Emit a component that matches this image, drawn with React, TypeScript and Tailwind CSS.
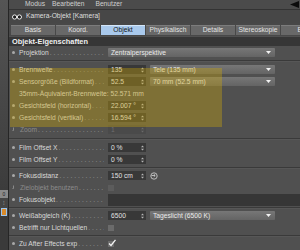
import type { ReactNode } from "react";

const LEADER = " . . . . . . . . . . . . . . . . . . . . . . . . . . . . . . . . . . . .";

function Bullet({ hook }: { hook?: boolean }) {
  if (hook) {
    return (
      <svg width="4" height="5" viewBox="0 0 4 5" className="shrink-0">
        <path d="M1.5 0.5 V3.5 H0.5" stroke="#8a8a8a" strokeWidth="1" fill="none" />
      </svg>
    );
  }
  return <span className="h-[3px] w-[3px] shrink-0 rounded-full bg-[#a9a9a9]" />;
}

function Label({ text, disabled, hook }: { text: string; disabled?: boolean; hook?: boolean }) {
  return (
    <div className="flex w-[99px] shrink-0 items-center pl-[3px] pr-[4px]">
      <Bullet hook={hook} />
      <span className={`ml-[4px] whitespace-nowrap ${disabled ? "text-[#8c8c8c]" : "text-[#d9d9d9]"}`}>
        {text}
      </span>
      <span className="ml-[1px] min-w-0 flex-1 overflow-hidden whitespace-nowrap text-[#9b9b9b]">{LEADER}</span>
    </div>
  );
}

function Spinner({ faint }: { faint?: boolean }) {
  return (
    <svg width="3" height="6" viewBox="0 0 3 6" className="ml-auto mr-[2px] shrink-0">
      <path d="M0 2.3 L1.5 0.5 L3 2.3 Z M0 3.7 L1.5 5.5 L3 3.7 Z" fill={faint ? "#6a6a6a" : "#b5b5b5"} />
    </svg>
  );
}

function Input({ value, faint }: { value: string; faint?: boolean }) {
  return (
    <div
      className={`flex h-[9px] w-[38px] shrink-0 items-center pl-[3px] ${
        faint ? "bg-[#4a4a4a] text-[#6e6e6e]" : "bg-[#383838] text-[#e2e2e2]"
      }`}
    >
      <span className="whitespace-nowrap">{value}</span>
      <Spinner faint={faint} />
    </div>
  );
}

function Dropdown({ value, wide }: { value: string; wide?: boolean }) {
  return (
    <div
      className={`flex h-[9px] shrink-0 items-center rounded-[1px] bg-gradient-to-b from-[#777777] to-[#646464] pl-[3px] text-[#ececec] ${
        wide ? "w-[167px]" : "ml-[4px] w-[125px]"
      }`}
    >
      <span className="whitespace-nowrap">{value}</span>
      <svg width="5" height="3" viewBox="0 0 5 3" className="ml-auto mr-[4px]">
        <path d="M0 0 H5 L2.5 3 Z" fill="#f2f2f2" />
      </svg>
    </div>
  );
}

function Check({ checked, dim }: { checked?: boolean; dim?: boolean }) {
  return (
    <div
      className={`relative flex h-[6px] w-[6px] items-center justify-center ${
        dim ? "bg-[#5c5c5c]" : "bg-[#6b6b6b]"
      }`}
    >
      {checked && (
        <svg width="8" height="8" viewBox="0 0 8 8" className="absolute -top-[2px] left-0">
          <path d="M1 4.5 L3 6.5 L7.5 0.8" stroke="#f4f4f4" strokeWidth="1.3" fill="none" />
        </svg>
      )}
    </div>
  );
}

function Row({ children }: { children: ReactNode }) {
  return <div className="flex h-[12px] items-center">{children}</div>;
}

function Sep({ h }: { h: string }) {
  return (
    <div className={`flex flex-col justify-center ${h}`}>
      <div className="h-px bg-[#3a3a3a]" />
      <div className="h-px bg-[#575757]" />
    </div>
  );
}

const tabs = ["Basis", "Koord.", "Objekt", "Physikalisch", "Details", "Stereoskopie", "Bild"];

export default function App() {
  return (
    <div className="flex h-[250px] w-[300px] overflow-hidden bg-[#505050] font-['Liberation_Sans',Arial,sans-serif] text-[6.7px] leading-none">
      {/* viewport edge */}
      <div className="flex w-[9px] shrink-0 flex-col border-r border-[#262626] bg-[#454545]">
        <div className="h-[190px] bg-gradient-to-b from-[#555555] to-[#3c3c3c]" />
        <div className="flex h-[8px] items-center justify-center bg-[#8a8a8a] text-[5px] text-[#222]">0</div>
        <div className="flex h-[10px] items-center justify-center text-[6px] text-[#bbb]">⁝</div>
        <div className="mx-[1px] h-[8px] border border-[#9cc4ee] bg-[#d98a2a]" />
        <div className="flex-1 bg-[#3a3a3a]" />
      </div>

      <div className="relative flex min-w-0 flex-1 flex-col">
        {/* menu */}
        <div className="flex h-[10px] items-center bg-[#4b4b4b] text-[#cfcfcf]">
          <span className="ml-[16px]">Modus</span>
          <span className="ml-[7px]">Bearbeiten</span>
          <span className="ml-[11px]">Benutzer</span>
          <svg width="9" height="7" viewBox="0 0 9 7" className="ml-auto mr-[1px]">
            <path d="M0 3.5 L9 0 V7 Z" fill="#0c0c0c" />
          </svg>
        </div>

        {/* title */}
        <div className="flex h-[15px] items-center border-t border-[#333] bg-[#474747] pl-[3px] text-[#dedede]">
          <svg width="10" height="6" viewBox="0 0 10 6" className="shrink-0">
            <rect x="3.5" y="2" width="3" height="2" fill="#e8e8e8" />
            <circle cx="2.6" cy="3" r="2.1" fill="#1c1c1c" stroke="#ececec" strokeWidth="1" />
            <circle cx="7.4" cy="3" r="2.1" fill="#1c1c1c" stroke="#ececec" strokeWidth="1" />
          </svg>
          <span className="ml-[4px] whitespace-nowrap">Kamera-Objekt [Kamera]</span>
        </div>

        {/* tabs */}
        <div className="flex h-[14px] gap-[1px] bg-[#484848] pl-[2px] pt-[2px]">
          {tabs.map((t) => (
            <div
              key={t}
              className={`flex h-[10px] w-[44px] shrink-0 items-center justify-center border-t ${
                t === "Objekt"
                  ? "border-[#d4e6f8] bg-[#a9c9ec] text-[#141414]"
                  : "border-[#7c7c7c] bg-[#686868] text-[#e4e4e4]"
              }`}
            >
              {t}
            </div>
          ))}
        </div>

        {/* header */}
        <div className="mt-[1px] flex h-[10px] items-center bg-[#363636] pl-[3px] text-[7.4px] font-bold text-[#f0f0f0]">
          Objekt-Eigenschaften
        </div>

        <div className="mt-[1px] flex flex-col">
          <Row>
            <Label text="Projektion" />
            <Dropdown value="Zentralperspektive" wide />
          </Row>
          <Sep h="h-[5px]" />
          <Row>
            <Label text="Brennweite" />
            <Input value="135" />
            <Dropdown value="Tele (135 mm)" />
          </Row>
          <Row>
            <Label text="Sensorgröße (Bildformat)" />
            <Input value="52.5" />
            <Dropdown value="70 mm (52.5 mm)" />
          </Row>
          <Row>
            <span className="ml-[10px] whitespace-nowrap text-[#d9d9d9]">35mm-Äquivalent-Brennweite: 52.571 mm</span>
          </Row>
          <Row>
            <Label text="Gesichtsfeld (horizontal)" />
            <Input value="22.007 °" />
          </Row>
          <Row>
            <Label text="Gesichtsfeld (vertikal)" />
            <Input value="16.594 °" />
          </Row>
          <Row>
            <Label text="Zoom" disabled hook />
            <Input value="1" faint />
          </Row>
          <Sep h="h-[6px]" />
          <Row>
            <Label text="Film Offset X" />
            <Input value="0 %" />
          </Row>
          <Row>
            <Label text="Film Offset Y" />
            <Input value="0 %" />
          </Row>
          <Sep h="h-[4px]" />
          <Row>
            <Label text="Fokusdistanz" />
            <Input value="150 cm" />
            <svg width="8" height="8" viewBox="0 0 8 8" className="ml-[4px]">
              <circle cx="4" cy="4" r="3.2" stroke="#c8c8c8" strokeWidth="0.9" fill="none" />
              <path d="M1.5 3.5 H5 M3.8 2.2 L5.2 3.5 L3.8 4.8" stroke="#c8c8c8" strokeWidth="0.9" fill="none" />
            </svg>
          </Row>
          <Row>
            <Label text="Zielobjekt benutzen" disabled hook />
            <Check dim />
          </Row>
          <Row>
            <Label text="Fokusobjekt" />
            <div className="h-[12px] flex-1 bg-[#363636]" />
          </Row>
          <Sep h="h-[4px]" />
          <Row>
            <Label text="Weißabgleich (K)" />
            <Input value="6500" />
            <Dropdown value="Tageslicht (6500 K)" />
          </Row>
          <Row>
            <Label text="Betrifft nur Lichtquellen" />
            <Check />
          </Row>
          <Sep h="h-[4px]" />
          <Row>
            <Label text="Zu After Effects exp" />
            <Check checked />
          </Row>
        </div>

        {/* highlight over the focal rows */}
        <div className="pointer-events-none absolute left-[1px] top-[68px] h-[59px] w-[212px] bg-[rgba(207,168,7,0.36)]" />
      </div>
    </div>
  );
}
